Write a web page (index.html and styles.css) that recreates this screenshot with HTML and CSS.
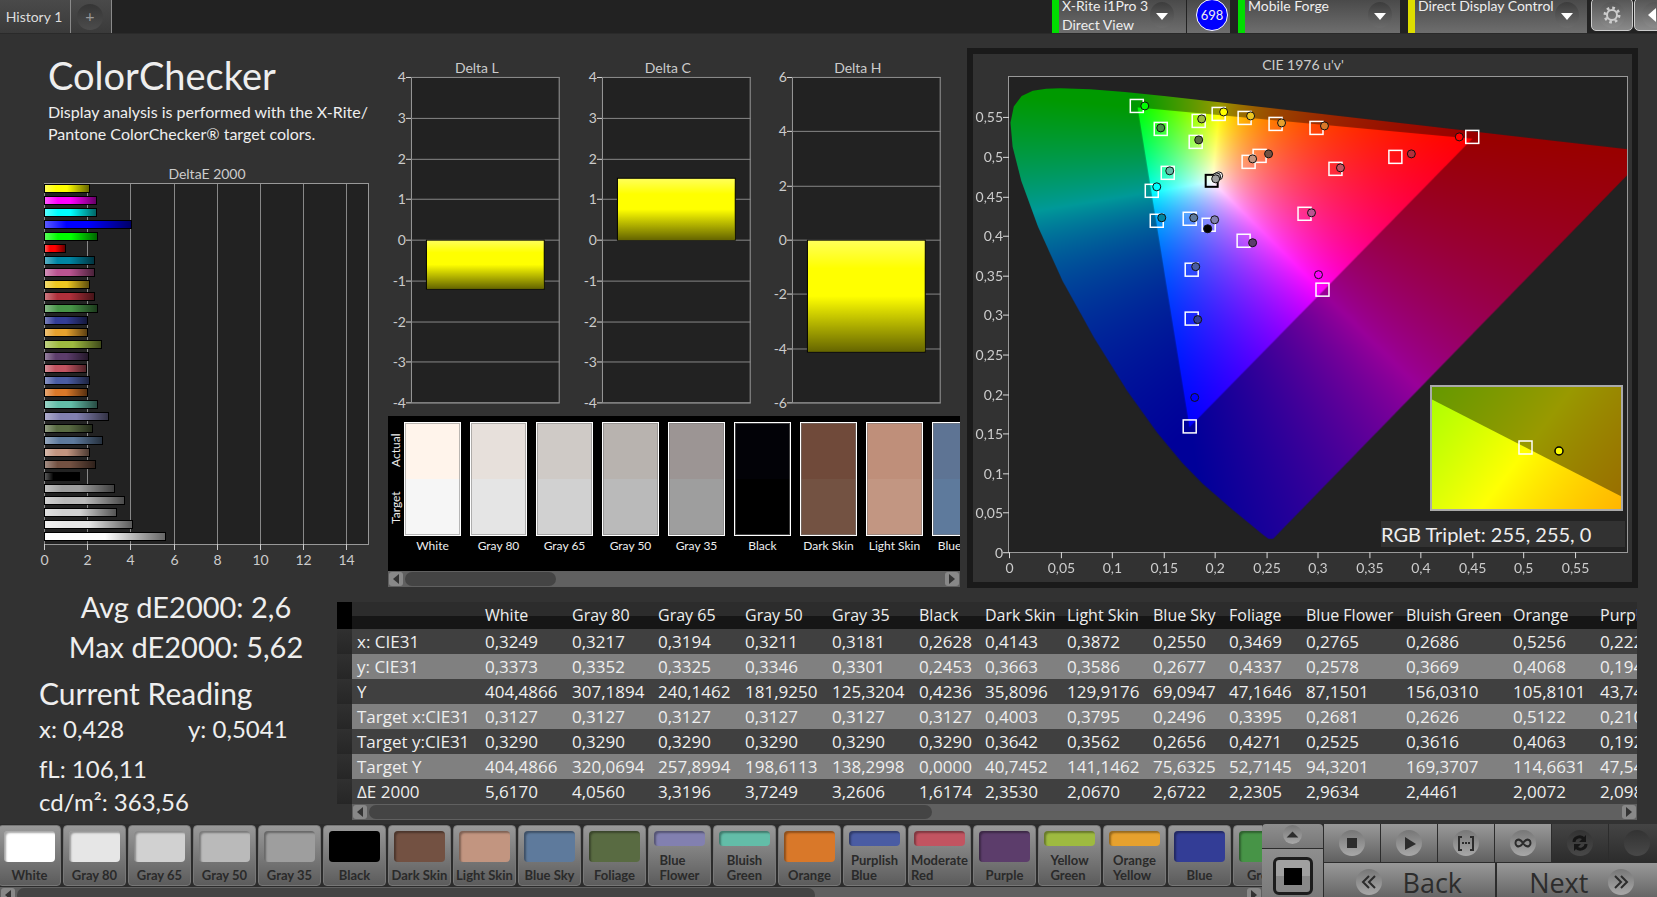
FILE: index.html
```html
<!DOCTYPE html>
<html lang="en">
<head>
    <meta charset="UTF-8">
    <meta name="viewport" content="width=device-width, initial-scale=1.0">
    <title>ColorChecker</title>
    <link rel="stylesheet" href="styles.css">
</head>
<body>
<header class="topbar">
    <nav class="tabs">
        <button class="tab">History 1</button>
        <button class="tab tab-add" aria-label="Add history"><span class="round">+</span></button>
    </nav>
    <div class="devices">
        <button class="device green meter">
            <span>X-Rite i1Pro 3<br>Direct View</span>
            <svg class="drop" viewBox="0 0 24 26"><path d="M6 11h12l-6 7z"/></svg>
        </button>
        <div class="counter"><span>698</span></div>
        <button class="device green source">
            <span>Mobile Forge</span>
            <svg class="drop" viewBox="0 0 24 26"><path d="M6 11h12l-6 7z"/></svg>
        </button>
        <button class="device yellow display">
            <span>Direct Display Control</span>
            <svg class="drop" viewBox="0 0 24 26"><path d="M6 11h12l-6 7z"/></svg>
        </button>
        <button class="square" aria-label="Settings">
            <svg class="gear" viewBox="0 0 26 26">
                <circle cx="13" cy="13" r="5" fill="none" stroke="#ccc" stroke-width="2"/>
                <circle cx="13" cy="13" r="7" fill="none" stroke="#ccc" stroke-width="3" stroke-dasharray="2.6 2.9"/>
            </svg>
        </button>
        <button class="square" aria-label="Collapse">
            <svg class="gear" viewBox="0 0 26 26"><path d="M14 6v14l-8-7z" fill="#fff"/></svg>
        </button>
    </div>
</header>

<main>
    <section class="charts">
        <div class="col-left">
            <h1>ColorChecker</h1>
            <p class="intro">Display analysis is performed with the X-Rite/<br>Pantone ColorChecker® target colors.</p>
            <svg id="deltaE" class="chart" viewBox="0 0 388 420"></svg>
        </div>
        <div class="col-mid">
            <div class="deltas">
                <svg id="deltaL" class="chart" viewBox="0 0 191 357"></svg>
                <svg id="deltaC" class="chart" viewBox="0 0 191 357"></svg>
                <svg id="deltaH" class="chart" viewBox="0 0 191 357"></svg>
            </div>
            <div class="compare">
                <div class="compare-body">
                    <div class="compare-side"><span>Actual</span><span>Target</span></div>
                    <div id="compare" class="compare-list"></div>
                </div>
                <div class="scroll"><button class="arrow" aria-label="Scroll left"></button><div class="track"><div class="thumb thumb-compare"></div></div><button class="arrow right" aria-label="Scroll right"></button></div>
            </div>
        </div>
        <div class="cie">
            <h2>CIE 1976 u'v'</h2>
            <div class="cie-plot">
                <canvas id="gamut" width="619" height="476"></canvas>
                <svg id="cieMarks" viewBox="0 0 619 476"></svg>
                <div class="inset">
                    <canvas id="insetGamut" width="189" height="122"></canvas>
                    <svg viewBox="0 0 189 122">
                        <rect x="87" y="54" width="13" height="13" fill="none" stroke="#fff" stroke-width="1.5"/>
                        <circle cx="127" cy="64" r="4" fill="#ff0" stroke="#000" stroke-width="1.5"/>
                    </svg>
                </div>
                <div class="triplet">RGB Triplet: 255, 255, 0</div>
            </div>
        </div>
    </section>

    <section class="data">
        <div class="readings">
            <p class="big">Avg dE2000: 2,6</p>
            <p class="big">Max dE2000: 5,62</p>
            <h3>Current Reading</h3>
            <p class="pair"><span>x: 0,428</span><span>y: 0,5041</span></p>
            <p class="value">fL: 106,11</p>
            <p class="value">cd/m²: 363,56</p>
        </div>
        <div class="table-box">
            <div class="table-clip"><table id="results"></table></div>
            <div class="scroll scroll-table"><button class="arrow" aria-label="Scroll left"></button><div class="track"><div class="thumb thumb-table"></div></div><button class="arrow right" aria-label="Scroll right"></button></div>
        </div>
    </section>
</main>

<footer>
    <div class="strip">
        <div id="patches" class="patches"></div>
        <div class="scroll"><button class="arrow" aria-label="Scroll left"></button><div class="track"><div class="thumb thumb-strip"></div></div><button class="arrow right" aria-label="Scroll right"></button></div>
    </div>
    <div class="window">
        <button class="up" aria-label="Show more">
            <svg class="disc disc-small" viewBox="0 0 26 26"><path d="M5 17h16l-8-8z"/></svg>
        </button>
        <button class="pattern" aria-label="Pattern window"><span></span></button>
    </div>
    <div class="controls">
        <div class="transport">
            <button aria-label="Stop"><svg class="disc" viewBox="0 0 26 26"><path d="M8 8h10v10H8z"/></svg></button>
            <button aria-label="Play"><svg class="disc" viewBox="0 0 26 26"><path d="M9 7l11 7-11 6z"/></svg></button>
            <button aria-label="Read series"><svg class="disc" viewBox="0 0 26 26"><path d="M9 7H6v13h3M17 7h3v13h-3" fill="none" stroke="#2c2c2c" stroke-width="2"/><path d="M9 12h2v2H9zM12 12h2v2h-2zM15 12h2v2h-2z"/></svg></button>
            <button aria-label="Read continuous"><svg class="disc" viewBox="0 0 26 26"><path d="M13 13c-2-3-4-4-6-3-2 1-2 5 0 6 2 1 4 0 6-3s4-4 6-3c2 1 2 5 0 6-2 1-4 0-6-3z" fill="none" stroke="#2c2c2c" stroke-width="2"/></svg></button>
            <button class="off" disabled aria-label="Refresh"><svg class="disc" viewBox="0 0 26 26"><path d="M7 12c0-5 7-7 10-3M19 14c0 5-7 7-10 3" fill="none" stroke="#161616" stroke-width="3"/><path d="M19 5v7h-7zM7 21v-7h7z" fill="#161616"/></svg></button>
            <button class="off" disabled aria-label="Record"><svg class="disc" viewBox="0 0 26 26"></svg></button>
        </div>
        <div class="steps">
            <button><svg class="disc" viewBox="0 0 26 26"><path d="M13 7l-6 6 6 6M19 7l-6 6 6 6" fill="none" stroke="#2c2c2c" stroke-width="2"/></svg>Back</button>
            <button>Next<svg class="disc" viewBox="0 0 26 26"><path d="M7 7l6 6-6 6M13 7l6 6-6 6" fill="none" stroke="#2c2c2c" stroke-width="2"/></svg></button>
        </div>
    </div>
</footer>
<script src="script.js"></script>
</body>
</html>
```
FILE: styles.css
```css
* {
    box-sizing: border-box;
    margin: 0;
    padding: 0;
}
body {
    height: 100vh;
    overflow: hidden;
    background: #323232;
    color: #eee;
    font-family: Lato, "Open Sans", sans-serif;
}
button {
    border: 0;
    color: inherit;
    font-family: inherit;
}

/* top bar */
.topbar {
    display: flex;
    justify-content: space-between;
    height: 34px;
    background: #222;
    border-bottom: 1px solid #2a2a2a;
    overflow: hidden;
}
.tabs {
    display: flex;
}
.tab {
    width: 71px;
    padding-right: 2px;
    border-right: 1px solid #8a8a8a;
    background: linear-gradient(#4a4a4a, #3a3a3a);
    color: #ddd;
    font-size: 14px;
    white-space: nowrap;
}
.tab-add {
    width: 41px;
    padding-left: 4px;
}
.round {
    display: block;
    width: 26px;
    height: 26px;
    margin-left: 2px;
    border-radius: 50%;
    background: linear-gradient(#353535, #4c4c4c);
    color: #999;
    font-size: 16px;
    line-height: 24px;
}
.devices {
    display: flex;
    margin-right: -20px;
}
.device {
    display: flex;
    justify-content: space-between;
    margin-right: 8px;
    padding: 0 8px 0 3px;
    border-left: 7px solid #0d0;
    background: linear-gradient(#4a4a4a, #6e6e6e);
    color: #eee;
    font-size: 14px;
    line-height: 19px;
    text-align: left;
    white-space: nowrap;
}
.device span {
    margin-top: -4px;
}
.yellow {
    border-color: #dd0;
}
.meter {
    width: 134px;
    padding-right: 12px;
    margin-right: 1px;
}
.source {
    width: 162px;
}
.display {
    width: 179px;
    margin-right: 4px;
}
.drop {
    width: 24px;
    height: 26px;
    margin-top: 2px;
    border-radius: 50%;
    background: linear-gradient(#3c3c3c, #6c6c6c);
    fill: #fff;
}
.counter {
    width: 43px;
    margin-right: 8px;
    padding-left: 9px;
    background: linear-gradient(#4a4a4a, #6e6e6e);
}
.counter span {
    display: block;
    width: 32px;
    height: 32px;
    margin-top: -1px;
    border: 1px solid #fff;
    border-radius: 50%;
    background: #00f;
    font-size: 13px;
    line-height: 30px;
    text-align: center;
}
.square {
    width: 42px;
    height: 33px;
    margin-top: -2px;
    margin-right: 1px;
    border: 1px solid #ccc;
    border-radius: 5px;
    background: linear-gradient(#555, #8a8a8a);
}
.gear {
    width: 26px;
    height: 26px;
    margin-top: 3px;
    border-radius: 50%;
    background: linear-gradient(#555, #8c8c8c);
}

/* charts */
.charts {
    display: grid;
    grid-template-columns: minmax(0, 388fr) minmax(0, 572fr) minmax(0, 697fr);
    align-items: start;
}
.chart {
    display: block;
    width: 100%;
    overflow: visible;
}
.chart text,
.cie-plot text {
    fill: #ccc;
    font-size: 14px;
}
h1 {
    padding: 18px 0 0 48px;
    font-size: 38px;
    font-weight: 400;
    line-height: 46px;
}
.intro {
    padding: 3px 0 15px 48px;
    font-size: 16px;
    line-height: 22px;
    white-space: nowrap;
}
.deltas {
    display: grid;
    grid-template-columns: 1fr 1fr 1fr;
    padding-top: 26px;
}
.compare {
    background: #000;
}
.compare-body {
    display: flex;
    height: 155px;
    padding-top: 6px;
}
.compare-side {
    display: flex;
    flex-direction: column;
    width: 16px;
    height: 114px;
    font-size: 12px;
}
.compare-side span {
    flex: 1;
    line-height: 16px;
    text-align: center;
    writing-mode: vertical-rl;
    transform: rotate(180deg);
}
.compare-list {
    display: flex;
    flex: 1;
    gap: 9px;
    min-width: 0;
    overflow: hidden;
}
.compare-item {
    flex: none;
    width: 57px;
    font-size: 12px;
    line-height: 20px;
    text-align: center;
    white-space: nowrap;
}
.compare-swatch {
    height: 114px;
    border: 1px solid #fff;
    box-shadow: inset 0 0 0 1px rgba(120, 120, 120, 0.5);
}

/* scroll bars */
.scroll {
    display: flex;
    align-items: center;
    height: 16px;
    padding: 0 1px;
    background: #606060;
}
.track {
    flex: 1;
    padding: 0 2px;
}
.thumb {
    height: 14px;
    border-radius: 7px;
    background: #444;
}
.thumb-compare {
    width: 28%;
}
.thumb-table {
    width: 45%;
}
.thumb-strip {
    width: 65%;
}
.arrow {
    width: 14px;
    height: 14px;
    border-radius: 3px;
    background: #888;
}
.arrow::before {
    content: "";
    display: block;
    margin-left: 4px;
    width: 0;
    border: 5px solid transparent;
    border-left: 0;
    border-right: 6px solid #333;
}
.arrow.right::before {
    border-right: 0;
    border-left: 6px solid #333;
}

/* CIE diagram */
.cie {
    margin: 14px 19px 0 7px;
    padding: 0 4px 29px 35px;
    border: 6px solid #1a1a1a;
}
.cie h2 {
    padding-right: 30px;
    color: #ccc;
    font-size: 14px;
    font-weight: 400;
    line-height: 22px;
    text-align: center;
}
.cie-plot {
    position: relative;
    border: 1px solid #999;
    background: #222;
}
.cie-plot canvas {
    display: block;
    width: 100%;
}
.cie-plot svg {
    position: absolute;
    inset: 0;
    width: 100%;
    height: 100%;
    overflow: visible;
}
.inset {
    position: absolute;
    right: 4px;
    bottom: 41px;
    width: 193px;
    border: 2px solid #aaa;
}
.triplet {
    position: absolute;
    right: 2px;
    bottom: 5px;
    width: 244px;
    background: #323232;
    font-size: 20px;
    line-height: 26px;
}

/* readings and results */
.data {
    display: grid;
    grid-template-columns: 337px minmax(0, 1fr);
    padding: 14px 20px 0 0;
}
.readings {
    margin-top: -15px;
    padding-left: 39px;
    white-space: nowrap;
}
.big {
    margin-left: -4px;
    font-size: 29px;
    line-height: 40px;
    text-align: center;
}
h3 {
    margin-top: 7px;
    font-size: 30px;
    font-weight: 400;
    line-height: 38px;
}
.pair {
    display: flex;
    font-size: 24px;
    line-height: 34px;
}
.pair span {
    width: 152px;
}
.value {
    padding-top: 1px;
    font-size: 24px;
    line-height: 32px;
}
.pair + .value {
    padding-top: 7px;
}
.table-clip {
    overflow: hidden;
}
table {
    width: 1398px;
    border-collapse: collapse;
    table-layout: fixed;
    font-family: "Open Sans", "Noto Sans", sans-serif;
    font-size: 17px;
}
th,
td {
    height: 25px;
    padding-left: 5px;
    font-weight: 400;
    line-height: 25px;
    text-align: left;
    white-space: nowrap;
}
td,
tbody th {
    background: #404040;
}
tr:nth-child(even) td,
tr:nth-child(even) th {
    background: #808080;
}
thead tr {
    background: linear-gradient(#2c2c2c 50%, #161616 50%);
}
thead th {
    height: 27px;
    font-size: 16px;
}
thead .gutter {
    background: #000;
}
tbody tr .gutter,
tbody tr:nth-child(even) .gutter {
    background: linear-gradient(#303030, #262626);
}
.scroll-table {
    margin-left: 15px;
}

/* bottom bar */
footer {
    display: grid;
    grid-template-columns: minmax(0, 1fr) 61px 334px;
    height: 78px;
    margin-top: 4px;
    background: #2c2c2c;
}
.patches {
    display: flex;
    gap: 2px;
    height: 63px;
    margin-left: -2px;
    padding-top: 1px;
    overflow: hidden;
}
.patch {
    display: flex;
    flex: none;
    flex-direction: column;
    align-items: center;
    justify-content: space-between;
    width: 63px;
    height: 61px;
    padding: 5px 0 2px;
    border: 1px solid #777;
    border-radius: 4px;
    background: linear-gradient(#999, #5c5c5c);
    color: #2a2a2a;
    font-size: 13px;
    font-weight: 700;
    line-height: 15px;
    text-align: left;
    white-space: nowrap;
}
.patch i {
    width: 51px;
    height: 31px;
    border-radius: 4px;
    box-shadow: inset 2px 2px 2px rgba(0, 0, 0, 0.35);
}
.patch .half {
    height: 15px;
}
.window {
    display: flex;
    flex-direction: column;
    gap: 1px;
}
.window button {
    background: linear-gradient(#8e8e8e, #777);
}
.up {
    height: 24px;
    border-radius: 4px 4px 0 0;
}
.pattern {
    flex: 1;
}
.pattern span {
    display: block;
    width: 40px;
    height: 38px;
    margin: 0 auto;
    border: 3px solid #1c1c1c;
    border-radius: 6px;
    background: linear-gradient(#000, #000) center / 18px 17px no-repeat, linear-gradient(#a0a0a0 50%, #888 50%);
}
.controls {
    margin-left: 1px;
}
.transport {
    display: grid;
    grid-template-columns: repeat(6, 1fr);
    gap: 1px;
    height: 38px;
    margin-right: -8px;
}
.controls button {
    display: flex;
    align-items: center;
    justify-content: center;
    background: linear-gradient(#999, #606060);
    color: #2c2c2c;
}
.controls .off {
    background: linear-gradient(#444, #2c2c2c);
}
.disc {
    width: 26px;
    height: 26px;
    border-radius: 50%;
    background: linear-gradient(#777, #a8a8a8);
    fill: #2c2c2c;
}
.disc-small {
    width: 19px;
    height: 19px;
}
.off .disc {
    background: linear-gradient(#333, #484848);
}
.steps {
    display: grid;
    grid-template-columns: 1fr 1fr;
    gap: 2px;
    margin: 1px -10px 0 0;
}
.steps button {
    gap: 20px;
    height: 38px;
    font-family: "Open Sans", sans-serif;
    font-size: 27px;
    font-weight: 500;
}
```
FILE: script.js
```js
var patches = [
    ["White", "#ffffff", 5.617],
    ["Gray 80", "#e6e6e6", 4.056],
    ["Gray 65", "#d1d1d1", 3.3196],
    ["Gray 50", "#bababa", 3.7249],
    ["Gray 35", "#9e9e9e", 3.2606],
    ["Black", "#000000", 1.6174],
    ["Dark Skin", "#735142", 2.353],
    ["Light Skin", "#c29580", 2.067],
    ["Blue Sky", "#5e7a9c", 2.6722],
    ["Foliage", "#596b42", 2.2305],
    ["Blue<br>Flower", "#8280b0", 2.9634],
    ["Bluish<br>Green", "#63bda8", 2.4461],
    ["Orange", "#d97829", 2.0072],
    ["Purplish<br>Blue", "#4a5ca3", 2.098],
    ["Moderate<br>Red", "#c25461", 1.93],
    ["Purple", "#5c3d6b", 2.05],
    ["Yellow<br>Green", "#9eba40", 2.66],
    ["Orange<br>Yellow", "#e6a12e", 1.97],
    ["Blue", "#333d96", 1.97],
    ["Green", "#479447", 2.47],
    ["Red", "#b0303b", 2.33],
    ["Yellow", "#edc721", 2.1],
    ["Magenta", "#ba5491", 2.33],
    ["Cyan", "#0085a3", 2.33],
    ["100% Red", "#ff0000", 0.95],
    ["100% Green", "#00ff00", 2.47],
    ["100% Blue", "#0000ff", 4.05],
    ["100% Cyan", "#00ffff", 2.42],
    ["100% Magenta", "#ff00ff", 2.42],
    ["100% Yellow", "#ffff00", 2.1]
];

function el(id) {
    return document.getElementById(id);
}
function line(x1, y1, x2, y2, color) {
    return '<line x1="' + x1 + '" y1="' + y1 + '" x2="' + x2 + '" y2="' + y2 + '" stroke="' + color + '"/>';
}
function rect(x, y, w, h, fill, stroke) {
    return '<rect x="' + x + '" y="' + y + '" width="' + w + '" height="' + h + '" fill="' + fill + '" stroke="' + stroke + '"/>';
}
function text(x, y, anchor, str) {
    return '<text x="' + x + '" y="' + y + '" text-anchor="' + anchor + '">' + str + '</text>';
}
function shade(id, dir) {
    return '<linearGradient id="' + id + '" x1="0" y1="0" ' + dir + '>' +
        '<stop offset="0" stop-color="#fff" stop-opacity=".35"/><stop offset=".25" stop-color="#fff" stop-opacity="0"/>' +
        '<stop offset=".5" stop-color="#000" stop-opacity="0"/><stop offset="1" stop-color="#000" stop-opacity=".6"/></linearGradient>';
}

// DeltaE 2000, last patch on top
function drawDeltaE() {
    var s = shade("shadeX", 'x2="1" y2="0"');
    s += text(207, 19, "middle", "DeltaE 2000");
    s += rect(44.5, 23.5, 324, 361, "#222", "#999");
    for (var v = 0; v <= 14; v += 2) {
        var x = Math.round(44 + v * 21.6) + 0.5;
        s += line(x, 24, x, 384, "#888") + line(x, 384, x, 390, "#ccc");
        s += text(x, 405, "middle", v);
    }
    for (var i = 0; i < patches.length; i++) {
        var p = patches[patches.length - 1 - i];
        var w = Math.round(p[2] * 21.6), y = 24.5 + i * 12;
        s += rect(44.5, y, w, 8, p[1], "#000") + rect(45, y + 0.5, w - 1, 7, "url(#shadeX)", "none");
    }
    el("deltaE").innerHTML = s;
}

function drawDelta(id, title, max, step, value) {
    var top = 17.5, height = 326, unit = height / (max * 2);
    var s = shade("shade" + id, 'x2="0" y2="1"');
    s += text(89, 13, "middle", title);
    s += rect(23.5, top, 148, height, "#222", "#999");
    for (var v = max; v >= -max; v -= step) {
        var y = Math.floor(top + (max - v) * unit) + 0.5;
        s += line(23, y, 172, y, "#888") + line(18, y, 23, y, "#ddd");
        s += text(18, y + 5, "end", v);
    }
    var zero = top + max * unit;
    var y1 = Math.floor(value > 0 ? zero - value * unit : zero) + 0.5;
    var h = Math.round(Math.abs(value) * unit);
    s += rect(38.5, y1, 118, h, "#ff0", "#000") + rect(39, y1 + 0.5, 117, h - 1, "url(#shade" + id + ")", "none");
    el(id).innerHTML = s;
}

function drawCompare() {
    var actual = ["#fff4eb", "#e7e0db", "#cfcac6", "#b8b3af", "#9c9594", "#020207", "#704a3a", "#bf8f7a", "#5e7494"];
    var target = ["#f6f6f6", "#e5e5e5", "#d1d1d1", "#bababa", "#9e9e9e", "#000000", "#735242", "#c29682", "#5e7a9c"];
    var s = "";
    for (var i = 0; i < actual.length; i++) {
        s += '<div class="compare-item"><div class="compare-swatch" style="background:linear-gradient(' +
            actual[i] + ' 50%,' + target[i] + ' 50%)"></div>' + patches[i][0] + '</div>';
    }
    el("compare").innerHTML = s;
}

function drawPatches() {
    var s = "";
    for (var i = 0; i < 20; i++) {
        var two = patches[i][0].indexOf("<br>") > 0;
        s += '<button class="patch"><i class="' + (two ? "half" : "full") + '" style="background:' + patches[i][1] + '"></i><span>' + patches[i][0] + '</span></button>';
    }
    el("patches").innerHTML = s;
}

function drawTable() {
    var widths = [15, 128, 87, 86, 87, 87, 87, 66, 82, 86, 76, 77, 100, 107, 87, 140];
    var head = ["", "White", "Gray 80", "Gray 65", "Gray 50", "Gray 35", "Black", "Dark Skin", "Light Skin", "Blue Sky", "Foliage", "Blue Flower", "Bluish Green", "Orange", "Purplish Blue"];
    var rows = [
        "x: CIE31|0,3249|0,3217|0,3194|0,3211|0,3181|0,2628|0,4143|0,3872|0,2550|0,3469|0,2765|0,2686|0,5256|0,222",
        "y: CIE31|0,3373|0,3352|0,3325|0,3346|0,3301|0,2453|0,3663|0,3586|0,2677|0,4337|0,2578|0,3669|0,4068|0,194",
        "Y|404,4866|307,1894|240,1462|181,9250|125,3204|0,4236|35,8096|129,9176|69,0947|47,1646|87,1501|156,0310|105,8101|43,74",
        "Target x:CIE31|0,3127|0,3127|0,3127|0,3127|0,3127|0,3127|0,4003|0,3795|0,2496|0,3395|0,2681|0,2626|0,5122|0,210",
        "Target y:CIE31|0,3290|0,3290|0,3290|0,3290|0,3290|0,3290|0,3642|0,3562|0,2656|0,4271|0,2525|0,3616|0,4063|0,192",
        "Target Y|404,4866|320,0694|257,8994|198,6113|138,2998|0,0000|40,7452|141,1462|75,6325|52,7145|94,3201|169,3707|114,6631|47,54",
        "ΔE 2000|5,6170|4,0560|3,3196|3,7249|3,2606|1,6174|2,3530|2,0670|2,6722|2,2305|2,9634|2,4461|2,0072|2,098"
    ];
    var s = "<colgroup>";
    widths.forEach(function (w) { s += '<col style="width:' + w + 'px">'; });
    s += '</colgroup><thead><tr><th class="gutter"></th><th>' + head.join("</th><th>") + "</th></tr></thead><tbody>";
    rows.forEach(function (r) {
        var c = r.split("|");
        s += '<tr><td class="gutter"></td><th scope="row">' + c.shift() + "</th><td>" + c.join("</td><td>") + "</td></tr>";
    });
    el("results").innerHTML = s + "</tbody>";
}

// spectral locus, CIE 1931 x,y
var locus = [.1741, .0050, .1714, .0051, .1689, .0069, .1644, .0109, .1566, .0177, .1440, .0297, .1355, .0399, .1241, .0578, .1096, .0868, .0913, .1327,
    .0687, .2007, .0454, .2950, .0235, .4127, .0082, .5384, .0039, .6548, .0139, .7502, .0389, .8120, .0743, .8338, .1142, .8262,
    .1547, .8059, .2296, .7543, .3016, .6923, .3731, .6245, .4441, .5547, .5125, .4866, .5752, .4242, .6270, .3725, .6915, .3083, .7347, .2653];

function toUV(x, y) {
    var d = -2 * x + 12 * y + 3;
    return [4 * x / d, 9 * y / d];
}

// every pixel gets the brightest rgb color of its u'v' point
function paintLayer(w, h, view, dim) {
    var c = document.createElement("canvas");
    c.width = w;
    c.height = h;
    var ctx = c.getContext("2d"), img = ctx.createImageData(w, h);
    for (var j = 0; j < h; j++) {
        for (var i = 0; i < w; i++) {
            var u = view.u + (i + 0.5) / w * view.du, v = view.v + (1 - (j + 0.5) / h) * view.dv;
            u += view.skew * (j / h - 0.5);
            var X = 9 * u / (4 * v), Z = (12 - 3 * u - 20 * v) / (4 * v);
            var rgb = [
                3.2406 * X - 1.5372 - 0.4986 * Z,
                -0.9689 * X + 1.8758 + 0.0415 * Z,
                0.0557 * X - 0.2040 + 1.0570 * Z
            ];
            var max = Math.max(rgb[0], rgb[1], rgb[2]), k = (j * w + i) * 4;
            for (var n = 0; n < 3; n++)
                img.data[k + n] = 255 * dim * Math.max(0, rgb[n]) / max;
            img.data[k + 3] = 255;
        }
    }
    ctx.putImageData(img, 0, 0);
    return c;
}

function paintGamut(id, view) {
    var c = el(id), ctx = c.getContext("2d"), w = c.width, h = c.height;
    function clipTo(xy) {
        ctx.beginPath();
        for (var i = 0; i < xy.length; i += 2) {
            var p = toUV(xy[i], xy[i + 1]);
            ctx.lineTo((p[0] - view.u) / view.du * w, (1 - (p[1] - view.v) / view.dv) * h);
        }
        ctx.closePath();
        ctx.clip();
    }
    ctx.save();
    clipTo(locus);
    ctx.drawImage(paintLayer(w, h, view, 0.6), 0, 0);
    ctx.restore();
    ctx.save();
    clipTo([.64, .33, .30, .60, .15, .06]);
    ctx.drawImage(paintLayer(w, h, view, 1), 0, 0);
    ctx.restore();
}

function drawMarks() {
    var s = "", i, v;
    for (i = 0; i < 12; i++) {
        v = i === 0 ? "0" : String(i * 5 / 100).replace(".", ",");
        var x = Math.round(i * 51.5) + 0.5, y = Math.round(476 - i * 39.6) + 0.5;
        s += line(x, 476, x, 482, "#ddd") + text(x, 497, "middle", v);
        s += line(-6, y, 0, y, "#ddd") + text(-6, y + 5, "end", v);
    }
    var targets = [128, 29, 152, 52, 190, 44, 187, 65, 210, 37, 236, 41, 267, 47, 308, 51, 464, 60, 387, 80, 327, 92, 251, 79, 240, 85,
        159, 96, 143, 114, 148, 144, 181, 142, 200, 148, 296, 137, 235, 164, 183, 193, 314, 213, 183, 242, 181, 350];
    for (i = 0; i < targets.length; i += 2)
        s += '<rect x="' + (targets[i] - 6.5) + '" y="' + (targets[i + 1] - 6.5) + '" width="13" height="13" fill="none" stroke="#fff" stroke-width="1.5"/>';
    s += '<rect x="197" y="98" width="12" height="12" fill="none" stroke="#000" stroke-width="2"/>';
    var dots = [136, 29, "#0f0", 152, 51, "#479447", 193, 42, "#9eba40", 190, 63, "#596b42", 215, 35, "#ff0", 242, 39, "#edc721",
        273, 46, "#e6a12e", 316, 49, "#d97829", 451, 60, "#f00", 403, 77, "#b0303b", 332, 91, "#c25461", 260, 77, "#735142",
        244, 82, "#c29580", 161, 94, "#63bda8", 148, 110, "#0ff", 153, 141, "#0085a3", 185, 141, "#5e7a9c", 206, 143, "#8280b0",
        199, 152, "#000", 210, 99, "#fff", 208, 100, "#bababa", 207, 102, "#9e9e9e", 303, 136, "#ba5491", 244, 166, "#5c3d6b",
        187, 190, "#4a5ca3", 310, 198, "#f0f", 189, 243, "#333d96", 186, 321, "#00f"];
    for (i = 0; i < dots.length; i += 3)
        s += '<circle cx="' + dots[i] + '" cy="' + dots[i + 1] + '" r="4" fill="' + dots[i + 2] + '" stroke="#111"/>';
    el("cieMarks").innerHTML = s;
}

drawDeltaE();
drawDelta("deltaL", "Delta L", 4, 1, -1.2);
drawDelta("deltaC", "Delta C", 4, 1, 1.52);
drawDelta("deltaH", "Delta H", 6, 2, -4.12);
drawCompare();
drawPatches();
drawTable();
paintGamut("gamut", { u: 0, v: 0, du: 0.601, dv: 0.601, skew: 0 });
paintGamut("insetGamut", { u: 0.1889, v: 0.5506, du: 0.03, dv: 0.0046, skew: 0.0144 });
drawMarks();
```
